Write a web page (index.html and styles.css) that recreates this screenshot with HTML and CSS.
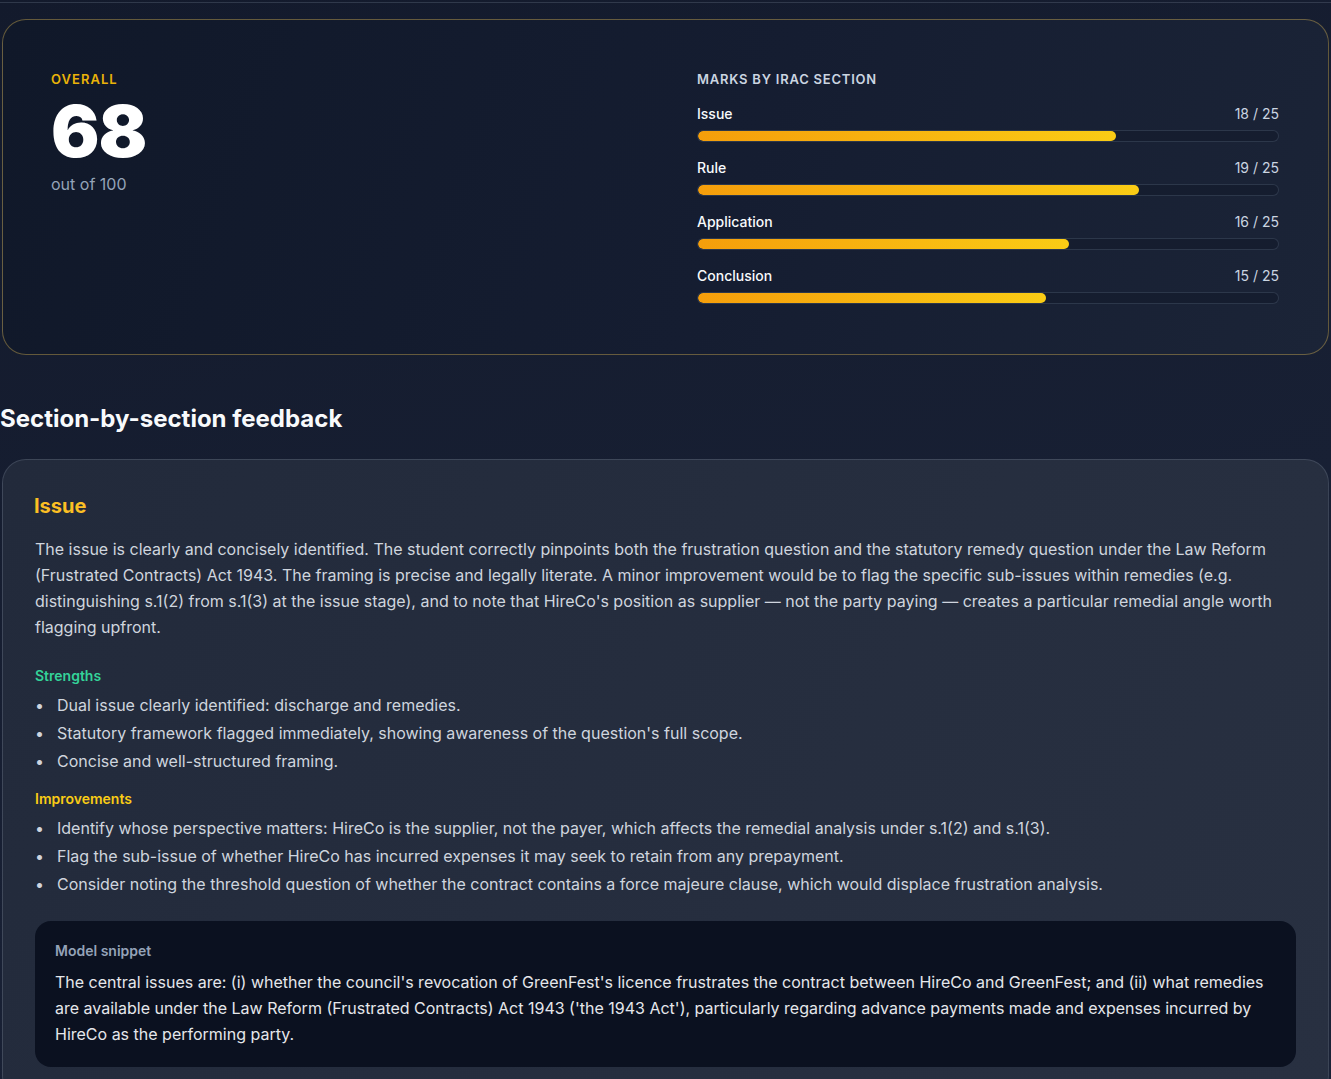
FILE: index.html
```html
<!DOCTYPE html>
<html lang="en">

<head>
     <meta charset="UTF-8">
     <meta name="viewport" content="width=device-width, initial-scale=1.0">
     <title>Marking report</title>
     <link rel="stylesheet" href="styles.css">
</head>

<body>
     <div class="top_rule"></div>

     <div class="score_card">
          <div class="overall">
               <p class="overall_label">OVERALL</p>
               <p class="overall_num">68</p>
               <p class="overall_sub">out of 100</p>
          </div>
          <div class="marks">
               <p class="marks_title">MARKS BY IRAC SECTION</p>
               <div class="mark_row">
                    <div class="mark_head"><span class="mark_name">Issue</span><span class="mark_val">18 / 25</span></div>
                    <div class="bar"><div class="bar_fill" style="width: 72%"></div></div>
               </div>
               <div class="mark_row">
                    <div class="mark_head"><span class="mark_name">Rule</span><span class="mark_val">19 / 25</span></div>
                    <div class="bar"><div class="bar_fill" style="width: 76%"></div></div>
               </div>
               <div class="mark_row">
                    <div class="mark_head"><span class="mark_name">Application</span><span class="mark_val">16 / 25</span></div>
                    <div class="bar"><div class="bar_fill" style="width: 64%"></div></div>
               </div>
               <div class="mark_row">
                    <div class="mark_head"><span class="mark_name">Conclusion</span><span class="mark_val">15 / 25</span></div>
                    <div class="bar"><div class="bar_fill" style="width: 60%"></div></div>
               </div>
          </div>
     </div>

     <h2 class="section_title">Section-by-section feedback</h2>

     <div class="feedback_card">
          <h3 class="fb_title">Issue</h3>
          <p class="fb_text">The issue is clearly and concisely identified. The student correctly pinpoints both the frustration question and the statutory remedy question under the Law Reform (Frustrated Contracts) Act 1943. The framing is precise and legally literate. A minor improvement would be to flag the specific sub-issues within remedies (e.g. distinguishing s.1(2) from s.1(3) at the issue stage), and to note that HireCo's position as supplier — not the party paying — creates a particular remedial angle worth flagging upfront.</p>

          <p class="fb_label strengths">Strengths</p>
          <ul class="fb_list">
               <li>Dual issue clearly identified: discharge and remedies.</li>
               <li>Statutory framework flagged immediately, showing awareness of the question's full scope.</li>
               <li>Concise and well-structured framing.</li>
          </ul>

          <p class="fb_label improvements">Improvements</p>
          <ul class="fb_list">
               <li>Identify whose perspective matters: HireCo is the supplier, not the payer, which affects the remedial analysis under s.1(2) and s.1(3).</li>
               <li>Flag the sub-issue of whether HireCo has incurred expenses it may seek to retain from any prepayment.</li>
               <li>Consider noting the threshold question of whether the contract contains a force majeure clause, which would displace frustration analysis.</li>
          </ul>

          <div class="snippet">
               <p class="snippet_label">Model snippet</p>
               <p class="snippet_text">The central issues are: (i) whether the council's revocation of GreenFest's licence frustrates the contract between HireCo and GreenFest; and (ii) what remedies are available under the Law Reform (Frustrated Contracts) Act 1943 ('the 1943 Act'), particularly regarding advance payments made and expenses incurred by HireCo as the performing party.</p>
          </div>
     </div>
</body>

</html>
```

FILE: styles.css
```css
html,
body {
     margin: 0;
     padding: 0;
}

body {
     background: linear-gradient(160deg, #131a2c 0%, #182034 60%, #1a2236 100%);
     min-height: 1079px;
     font-family: Inter, "Noto Sans", sans-serif;
     color: #e2e8f0;
     padding: 0 2px 0 2px;
     overflow: hidden;
}

p {
     margin: 0;
}

.top_rule {
     height: 2px;
     border-bottom: 1px solid rgba(148, 163, 184, 0.22);
     margin: 0 -2px 16px;
}

.score_card {
     display: grid;
     grid-template-columns: 1fr 1fr;
     gap: 64px;
     padding: 48px 49px 50px 48px;
     border: 1px solid rgba(202, 168, 80, 0.45);
     border-radius: 24px;
     background: linear-gradient(110deg, #101829 0%, #151d31 55%, #1b2437 100%);
}

.overall_label {
     font-size: 13px;
     font-weight: 600;
     letter-spacing: 0.08em;
     line-height: 22px;
     color: #eab308;
}

.overall_num {
     font-size: 72px;
     font-weight: 900;
     line-height: 82px;
     color: #ffffff;
     letter-spacing: -0.015em;
}

.overall_sub {
     margin-top: 0;
     font-size: 16px;
     line-height: 24px;
     color: #94a3b8;
}

.marks_title {
     font-size: 13px;
     font-weight: 600;
     letter-spacing: 0.06em;
     line-height: 22px;
     color: #cbd5e1;
     margin-bottom: 14px;
}

.mark_row {
     margin-bottom: 16px;
}

.mark_row:last-child {
     margin-bottom: 0;
}

.mark_head {
     display: flex;
     justify-content: space-between;
     font-size: 14px;
     line-height: 20px;
     margin-bottom: 6px;
}

.mark_name {
     font-weight: 500;
     color: #f8fafc;
}

.mark_val {
     color: #cbd5e1;
}

.bar {
     height: 10px;
     border-radius: 999px;
     background: #151d2f;
     border: 1px solid rgba(100, 116, 139, 0.3);
     overflow: hidden;
}

.bar_fill {
     height: 100%;
     border-radius: 999px;
     background: linear-gradient(90deg, #f59e0b, #facc15);
}

.section_title {
     margin: 48px 0 24px -2px;
     font-size: 24px;
     font-weight: 700;
     line-height: 32px;
     color: #f8fafc;
}

.feedback_card {
     padding: 32px;
     border: 1px solid rgba(148, 163, 184, 0.22);
     border-radius: 24px;
     background: linear-gradient(120deg, #222a3b 0%, #262e3f 60%, #283041 100%);
}

.fb_title {
     margin: 0 0 16px -1px;
     font-size: 20px;
     font-weight: 700;
     line-height: 28px;
     color: #fbbf24;
}

.fb_text {
     font-size: 16px;
     line-height: 26px;
     color: #cfd5de;
}

.fb_label {
     margin-top: 26px;
     font-size: 14px;
     font-weight: 600;
     line-height: 20px;
}

.fb_label.strengths {
     color: #34d399;
}

.fb_label.improvements {
     margin-top: 14px;
     color: #facc15;
}

.fb_list {
     margin: 5px 0 0;
     padding: 0;
     list-style: none;
     font-size: 16px;
     line-height: 28px;
     color: #cfd5de;
}

.fb_list li::before {
     content: "•";
     display: inline-block;
     width: 22px;
}

.snippet {
     margin-top: 23px;
     padding: 20px;
     border-radius: 16px;
     background: #0b1120;
}

.snippet_label {
     font-size: 14px;
     font-weight: 600;
     line-height: 20px;
     color: #94a3b8;
     margin-bottom: 8px;
}

.snippet_text {
     font-size: 16px;
     line-height: 26px;
     color: #e5e7eb;
}
```
